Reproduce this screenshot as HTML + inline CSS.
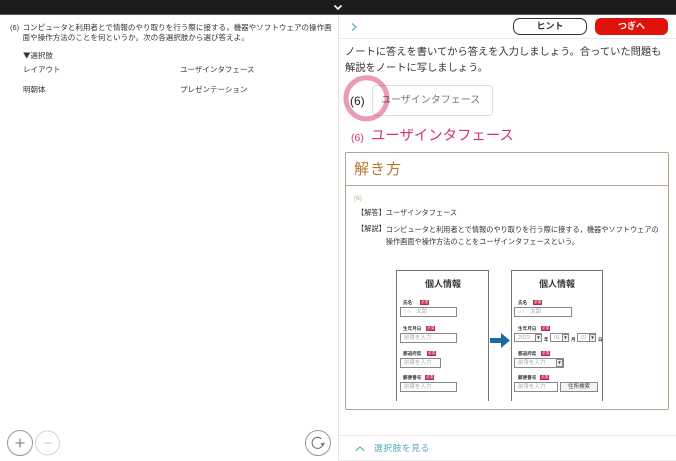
<!DOCTYPE html>
<html lang="ja">
<head>
<meta charset="utf-8">
<style>
html,body{margin:0;padding:0;background:#fff;}
#p{position:relative;width:676px;height:461px;overflow:hidden;background:#fff;font-family:"Liberation Sans","Noto Sans CJK JP",sans-serif;color:#222;filter:blur(.25px);}
.a{position:absolute;white-space:nowrap;}
.l{font-size:7.5px;line-height:10px;color:#333;}
.e{font-size:7.2px;line-height:10px;color:#333;}
.f{position:absolute;box-sizing:border-box;border:1px solid #888;background:#fff;font-size:5.5px;line-height:8px;color:#aaa;padding-left:3px;height:10px;white-space:nowrap;}
.r{position:absolute;background:#c0274a;color:#fff;font-size:3.5px;line-height:5px;height:5px;width:9px;text-align:center;}
.t{position:absolute;font-size:4.6px;line-height:6px;font-weight:bold;color:#333;white-space:nowrap;}
.h{position:absolute;font-size:9px;line-height:12px;font-weight:bold;color:#333;white-space:nowrap;}
.s{position:absolute;box-sizing:border-box;border:1px solid #888;height:8px;width:7px;font-size:4.5px;line-height:6px;color:#333;text-align:center;background:#eee;}
</style>
</head>
<body>
<div id="p">
<div class="a" style="left:0;top:0;width:676px;height:14px;background:#1c1c1c;border-bottom:1px solid #555"></div>
<svg class="a" style="left:333px;top:4px" width="10" height="7"><path d="M1.5 1.5L5 5L8.5 1.5" fill="none" stroke="#fff" stroke-width="1.6"/></svg>
<div class="a" style="left:338px;top:15px;width:1px;height:446px;background:#e4e4e4"></div>

<div class="a l" style="left:10px;top:23px">(6)</div>
<div class="a" style="left:22.5px;top:22.5px;font-size:7.56px;line-height:10.5px;color:#333">コンピュータと利用者とで情報のやり取りを行う際に接する，機器やソフトウェアの操作画<br>面や操作方法のことを何というか。次の各選択肢から選び答えよ。</div>
<div class="a l" style="left:23px;top:51px"><span style="font-family:'Noto Sans CJK JP',sans-serif">▼</span>選択肢</div>
<div class="a l" style="left:23px;top:65px">レイアウト</div>
<div class="a l" style="left:180px;top:65px">ユーザインタフェース</div>
<div class="a l" style="left:23px;top:85px">明朝体</div>
<div class="a l" style="left:180px;top:85px">プレゼンテーション</div>

<svg class="a" style="left:0;top:425px" width="340" height="36">
<circle cx="20" cy="18" r="12.5" fill="#fff" stroke="#999"/>
<path d="M20 13.5V22.5M15.5 18H24.5" stroke="#777" stroke-width="1.1"/>
<circle cx="47.5" cy="18" r="12" fill="#fff" stroke="#d4d4d4"/>
<path d="M43.5 18H51.5" stroke="#ccc" stroke-width="1.1"/>
<circle cx="318" cy="18" r="12.5" fill="#fff" stroke="#999"/>
<path d="M323 19A5.5 5.5 0 1 1 321.5 14" fill="none" stroke="#666" stroke-width="1"/>
<path d="M320.5 18.5L323 21L325 17.5Z" fill="#666"/>
</svg>

<svg class="a" style="left:350px;top:22px" width="8" height="10"><path d="M2 1.5L6 5L2 8.5" fill="none" stroke="#5ab3c0" stroke-width="1.3"/></svg>
<div class="a" style="left:513px;top:18px;width:74px;height:17px;box-sizing:border-box;border:1px solid #333;border-radius:7px;text-align:center;font-size:9px;line-height:15px;font-weight:bold;color:#333">ヒント</div>
<div class="a" style="left:595px;top:18px;width:73px;height:17px;background:#e0130c;border-radius:6px;text-align:center;font-size:9px;line-height:17px;font-weight:bold;color:#fff">つぎへ</div>
<div class="a" style="left:339px;top:38px;width:337px;height:1px;background:#ececec"></div>

<div class="a" style="left:345px;top:45px;font-size:10.26px;line-height:16px;color:#333">ノートに答えを書いてから答えを入力しましょう。合っていた問題も<br>解説をノートに写しましょう。</div>

<div class="a" style="left:350px;top:92px;font-size:12px;line-height:18px;color:#222">(6)</div>
<div class="a" style="left:372px;top:85px;width:121px;height:31px;box-sizing:border-box;border:1px solid #ddd;border-radius:4px;font-size:10px;line-height:29px;color:#777;padding-left:8px">ユーザインタフェース</div>
<svg class="a" style="left:342px;top:74px;mix-blend-mode:multiply" width="50" height="50"><circle cx="24.5" cy="24.3" r="20.5" fill="none" stroke="#ec9cb0" stroke-width="5"/></svg>

<div class="a" style="left:351px;top:130px;font-size:10.5px;line-height:16px;color:#d6336c">(6)</div>
<div class="a" style="left:371px;top:126px;font-size:14.4px;line-height:20px;color:#d6336c">ユーザインタフェース</div>

<div class="a" style="left:345px;top:152px;width:324px;height:258px;box-sizing:border-box;border:1.5px solid #b8a48c;border-radius:2px;background:#fff"></div>
<div class="a" style="left:346px;top:185px;width:322px;height:1px;background:#bda98f"></div>
<div class="a" style="left:354px;top:160px;font-size:15px;line-height:20px;letter-spacing:1px;color:#b5762f">解き方</div>
<div class="a" style="left:354px;top:194px;font-size:6.5px;line-height:9px;color:#c0a585">(6)</div>
<div class="a e" style="left:357px;top:208px">【解答】ユーザインタフェース</div>
<div class="a e" style="left:357px;top:224px">【解説】</div>
<div class="a e" style="left:385.8px;top:224px;line-height:11.5px">コンピュータと利用者とで情報のやり取りを行う際に接する，機器やソフトウェアの<br>操作画面や操作方法のことをユーザインタフェースという。</div>

<!-- left form -->
<div class="a" style="left:396px;top:270px;width:93px;height:131px;box-sizing:border-box;border:1px solid #777;border-bottom:0"></div>
<div class="h" style="left:425px;top:278px">個人情報</div>
<div class="t" style="left:403px;top:300px">氏名</div><div class="r" style="left:420px;top:300px">必須</div>
<div class="f" style="left:400px;top:307px;width:57px">○○　太郎</div>
<div class="t" style="left:403px;top:326px">生年月日</div><div class="r" style="left:426px;top:326px">必須</div>
<div class="f" style="left:400px;top:333px;width:57px">前齋を入力</div>
<div class="t" style="left:403px;top:351px">都道府県</div><div class="r" style="left:427px;top:351px">必須</div>
<div class="f" style="left:400px;top:358px;width:41px">前齋を入力</div>
<div class="t" style="left:403px;top:375px">郵便番号</div><div class="r" style="left:425px;top:375px">必須</div>
<div class="f" style="left:400px;top:382px;width:57px">前齋を入力</div>

<svg class="a" style="left:489px;top:332px" width="22" height="17"><path d="M1 6H12V1L21 8.5L12 16V11H1Z" fill="#1e6aa8"/></svg>

<!-- right form -->
<div class="a" style="left:511px;top:270px;width:92px;height:131px;box-sizing:border-box;border:1px solid #777;border-bottom:0"></div>
<div class="h" style="left:539px;top:278px">個人情報</div>
<div class="t" style="left:518px;top:300px">氏名</div><div class="r" style="left:533px;top:300px">必須</div>
<div class="f" style="left:514px;top:307px;width:58px">○○　太郎</div>
<div class="t" style="left:518px;top:326px">生年月日</div><div class="r" style="left:541px;top:326px">必須</div>
<div class="f" style="left:514px;top:333px;width:28px;height:9px">2022</div>
<div class="s" style="left:535px;top:333.5px">▼</div>
<div class="f" style="left:550px;top:333px;width:19px;height:9px">01</div>
<div class="s" style="left:562px;top:333.5px">▼</div>
<div class="f" style="left:577px;top:333px;width:19px;height:9px">01</div>
<div class="s" style="left:589px;top:333.5px">▼</div>
<div class="t" style="left:544px;top:337px">年</div><div class="t" style="left:571px;top:337px">月</div><div class="t" style="left:598px;top:337px">日</div>
<div class="t" style="left:518px;top:351px">都道府県</div><div class="r" style="left:541px;top:351px">必須</div>
<div class="f" style="left:514px;top:358px;width:50px">前齋を入力</div>
<div class="s" style="left:556px;top:359px">▼</div>
<div class="t" style="left:518px;top:375px">郵便番号</div><div class="r" style="left:540px;top:375px">必須</div>
<div class="f" style="left:514px;top:382px;width:44px">前齋を入力</div>
<div class="f" style="left:560px;top:382px;width:38px;padding:0;text-align:center;color:#333;background:#f4f4f4">住所検索</div>

<div class="a" style="left:339px;top:435px;width:337px;height:1px;background:#eee"></div>
<svg class="a" style="left:354px;top:444px" width="12" height="9"><path d="M2 6.5L6 3L10 6.5" fill="none" stroke="#5ab3c0" stroke-width="1.2"/></svg>
<div class="a" style="left:374px;top:442px;font-size:8.8px;line-height:13px;letter-spacing:.5px;color:#4fa9b5">選択肢を見る</div>
<div class="a" style="left:339px;top:460px;width:337px;height:1px;background:#eee"></div>
</div>
</body>
</html>
